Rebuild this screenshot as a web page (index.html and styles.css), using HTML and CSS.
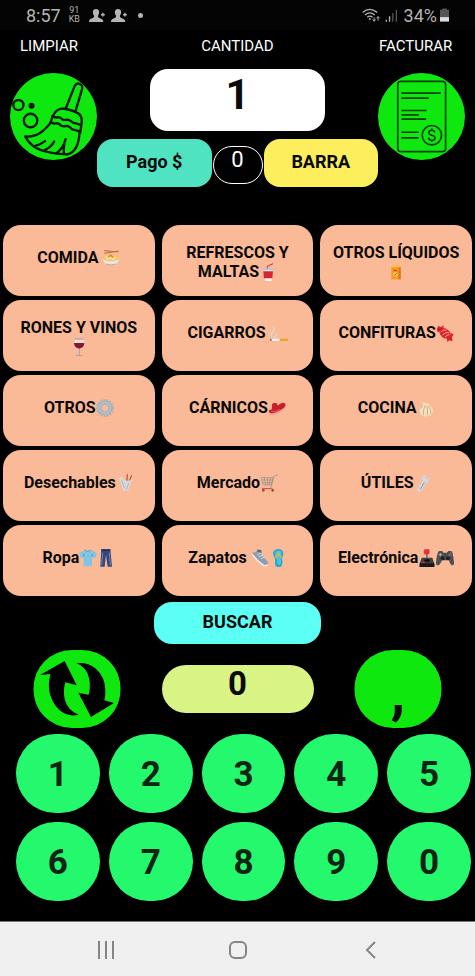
FILE: index.html
```html
<!DOCTYPE html>
<html lang="es">
<head>
<meta charset="utf-8">
<meta name="viewport" content="width=device-width, initial-scale=1">
<title>Punto de venta</title>
<link rel="stylesheet" href="styles.css">
</head>
<body>
<div class="screen">

  <!-- status bar -->
  <header class="status">
    <span class="clock">8:57</span>
    <span class="speed"><span>91</span><span>KB</span></span>
    <svg class="person" viewBox="0 0 16 15"><path d="M7 1c2.300 0 3.400 1.600 3.100 3.800-.2 1.500-.8 2.400-1.200 3 0 1.700.7 2 2.600 2.800 1.800.7 2.700 1.300 2.800 3.400H0c0-2.100.8-2.700 2.600-3.400 1.900-.8 2.500-1.100 2.500-2.800-.5-.6-1.100-1.500-1.200-3C3.600 2.600 4.700 1 7 1zM12 6h1.200V4.800h1.400V6h1.200v1.400h-1.200v1.200h-1.400V7.400H12z"/></svg>
    <svg class="person" viewBox="0 0 16 15"><path d="M7 1c2.300 0 3.400 1.600 3.100 3.800-.2 1.500-.8 2.400-1.200 3 0 1.700.7 2 2.600 2.800 1.800.7 2.700 1.300 2.800 3.400H0c0-2.100.8-2.700 2.600-3.400 1.900-.8 2.500-1.100 2.500-2.800-.5-.6-1.100-1.500-1.200-3C3.600 2.600 4.700 1 7 1zM12 6h1.200V4.800h1.400V6h1.200v1.400h-1.200v1.200h-1.400V7.400H12z"/></svg>
    <span class="dot"></span>
    <svg class="wifi" viewBox="384 20 58 45"><g fill="none" stroke="#b4b4b4" stroke-width="4"><path d="M386 33q21-18 44 0M393 41q15-13 30 0M400 48q8-7 16 0"/><path stroke-width="3" d="M421 48v12M416 55l5 5 5-5M433 58V46M428 51l5-5 5 5"/></g><circle cx="408" cy="53" r="3" fill="#b4b4b4"/></svg>
    <svg class="signal" viewBox="454 24 38 40"><path fill="#b4b4b4" d="M455 57h4v6h-4zM465 46h4v17h-4z"/><path fill="#555" d="M475 36h4v27h-4zM486 26h4v37h-4z"/></svg>
    <span class="percent">34%</span>
    <svg class="battery" viewBox="614 22 28 41"><path fill="#555" d="M621 22h14v4h7v24h-28V26h7z"/><path fill="#ddd" d="M614 49h28v14h-28z"/></svg>
  </header>

  <main>
    <section class="top">
      <div class="side">
        <label class="caption" for="limpiar">LIMPIAR</label>
        <button class="round" id="limpiar" type="button">
          <!-- broom -->
          <svg viewBox="0 0 258 258">
            <g fill="none" stroke="#001a00" stroke-width="7" stroke-linejoin="round" stroke-linecap="round">
              <path d="M165 106L192 38Q197 29 206 32Q216 35 214 47L194 114"/>
              <path d="M125 131L133 118Q143 104 160 106Q185 109 203 120Q214 129 213 144L208 178"/>
              <path d="M126 128Q134 134 142 131Q150 131 156 138Q164 140 171 138Q180 140 186 147Q198 150 209 154"/>
              <path d="M121 146Q130 152 139 149Q147 150 153 157Q162 159 169 157Q177 159 184 167Q194 169 206 173"/>
              <path d="M126 130L120 148Q96 178 76 184Q60 190 45 188Q60 217 92 229Q132 242 171 241Q204 232 206 176"/>
              <path d="M73 217Q91 212 104 202M102 229Q123 219 131 203M138 238Q159 222 165 196M160 240Q158 225 161 212"/>
              <circle cx="25" cy="95" r="15"/>
              <circle cx="61" cy="141" r="20"/>
            </g>
            <circle cx="64" cy="97" r="9" fill="#001a00"/>
          </svg>
        </button>
      </div>

      <div class="center">
        <label class="caption" for="cantidad">CANTIDAD</label>
        <input class="amount" id="cantidad" type="text" inputmode="numeric" value="1">
        <div class="pay">
          <button class="pago" type="button">Pago $</button>
          <output class="count">0</output>
          <button class="barra" type="button">BARRA</button>
        </div>
      </div>

      <div class="side invoice">
        <label class="caption" for="facturar">FACTURAR</label>
        <button class="round" id="facturar" type="button">
          <!-- invoice -->
          <svg viewBox="427 219 260 260">
            <g fill="none" stroke="#034003" stroke-width="5">
              <rect x="486" y="244" width="143" height="210" rx="9"/>
              <path d="M497 279h117M497 294h82M497 331h75M497 344h52M497 357h74M497 396h52M497 413h52"/>
              <circle cx="588" cy="405" r="29" fill="#0ee80e"/>
              <path d="M597 397Q595 390 588 390Q579 390 579 397Q579 403 588 405Q597 407 597 413Q597 420 588 420Q579 420 578 412M588 385v5M588 420v5"/>
            </g>
          </svg>
        </button>
      </div>
    </section>

    <section class="categories">
      <button type="button"><span>COMIDA <svg class="emoji" viewBox="309 101 54 54"><path fill="#e9e6df" d="M311 128h50q-2 16-13 20-13 5-25-1-11-6-12-19z"/><ellipse cx="336" cy="128" rx="25" ry="10" fill="#f5c36c"/><path d="M318 127q8-8 16 0t18-2M321 132q12-7 24 1" fill="none" stroke="#fbe3a0" stroke-width="4"/><path d="M327 125l8-5 7 6" fill="none" stroke="#dd7e33" stroke-width="4"/><path d="M315 106l43 4M316 114l43-7" stroke="#a5764a" stroke-width="3"/><path d="M322 146q14 7 28 0" stroke="#b9a59a" stroke-width="3" fill="none"/></svg></span></button>
      <button type="button"><span>REFRESCOS Y MALTAS<svg class="emoji" viewBox="74 140 54 54"><path d="M99 158v-8l17-8" fill="none" stroke="#dd2b33" stroke-width="3"/><path fill="#f3eeee" d="M87 160h29l-4 34H92z"/><path fill="#d2272f" d="M87 165h29l-2 21H89z"/><path fill="#b8c7d3" d="M84 156h34v6H84z"/></svg></span></button>
      <button type="button"><span>OTROS LÍQUIDOS <svg class="emoji" viewBox="455 147 54 54"><path fill="#f39a21" d="M468 158h28v38h-28z"/><path fill="#ffc247" d="M468 158l5-5h23v7h-28z"/><path fill="#e2751a" d="M490 160h6v36h-6z"/><circle cx="480" cy="181" r="7" fill="#ffc95d"/><path d="M474 168l11 3M477 184l7-6" stroke="#b74310" stroke-width="3"/></svg></span></button>

      <button type="button"><span>RONES Y VINOS <svg class="emoji" viewBox="211 368 54 54"><path fill="#e7dad9" d="M225 370h27l3 15q0 14-14 17v14l8 4h-20l8-4v-14q-14-3-14-17z"/><path fill="#8b1728" d="M223 383h31q0 15-16 17-15-3-15-17z"/><path d="M239 401v17M230 420h18M225 371h27" stroke="#827b80" stroke-width="2"/><path d="M229 374l-2 9" stroke="#fff" stroke-width="3"/></svg></span></button>
      <button type="button"><span>CIGARROS <svg class="emoji" viewBox="105 325 54 54"><path fill="#f6f3ef" d="M106 369h29v7h-29z"/><path fill="#eda427" d="M134 369h25v7h-25z"/><path fill="#777" d="M105 369h5v7h-5z"/><path d="M111 365q-6-9 2-16 7-7 2-17M117 365q9-4 6-12" fill="none" stroke="#e3d3ca" stroke-width="5"/></svg></span></button>
      <button type="button"><span>CONFITURAS<svg class="emoji" viewBox="605 324 54 54"><g fill="#d9252d"><path d="M607 341l5-12 7 5 9-6-1 17-17 3zM637 364l14-13 7 5-5 6 1 14-9-3-6 5z"/><ellipse cx="632" cy="352" rx="18" ry="14" transform="rotate(38 632 352)"/></g><path d="M619 348q10-9 18-6M624 357q11-11 20-7M632 363q7-8 14-7" fill="none" stroke="#ff9a9a" stroke-width="3"/><path d="M611 341l10-3M646 366l6 5" stroke="#9c101d" stroke-width="2"/></svg></span></button>

      <button type="button"><span>OTROS<svg class="emoji" viewBox="289 85 54 54"><circle cx="316" cy="112" r="24" fill="none" stroke="#a3b0b6" stroke-width="6" stroke-dasharray="5 4"/><circle cx="316" cy="112" r="16" fill="none" stroke="#a8b5bc" stroke-width="13"/><circle cx="316" cy="112" r="16" fill="none" stroke="#bcc8cd" stroke-width="3"/></svg></span></button>
      <button type="button"><span>CÁRNICOS<svg class="emoji" viewBox="99 85 54 54"><path fill="#f0a49b" d="M101 125q-1 10 12 9 24-4 38-22l-1-10-46 14z"/><path fill="#c91d2b" d="M103 118q9 2 8-8-2-14 8-13 10-1 9 8 13-13 23-6 3 9-11 17-18 12-31 12-10-1-6-10z"/><path d="M109 122q13 3 25-6" fill="none" stroke="#f4777a" stroke-width="2"/></svg></span></button>
      <button type="button"><span>COCINA<svg class="emoji" viewBox="545 84 54 54"><path fill="#f1dfbd" d="M559 91q7 6 12 5 8 1 13 9 11 6 9 17-4 12-18 14-16 2-21-9-4-12 9-19 3-9-4-17z"/><path d="M570 103q-10 17-5 30M575 105q4 16 0 29M580 105q8 11 6 24" fill="none" stroke="#b99c73" stroke-width="2"/><path fill="#fff3d7" d="M563 110q-8 8-4 17-10-10 4-17z"/></svg></span></button>

      <button type="button"><span>Desechables<svg class="emoji" viewBox="349 310 54 54"><path d="M381 338l2-27M387 336l9-22" stroke="#a63931" stroke-width="3"/><path fill="#d6d9db" d="M358 321l8-3 9 11 11 2 12-7-6 17-7 19-13 2-5-13z"/><path d="M366 328l8 24M388 336l-9 22" stroke="#9da4a9" stroke-width="2"/></svg></span></button>
      <button type="button"><span>Mercado<svg class="emoji" viewBox="77 309 54 54"><path d="M80 320h37l-6 22H87zM118 315l-9 38H83M119 315l12-3M84 327h31M85 335h28M90 320l4 22M100 320v22M109 320l-4 22" fill="none" stroke="#928b8a" stroke-width="2"/><circle cx="87" cy="358" r="4" fill="#bd3830"/><circle cx="115" cy="358" r="4" fill="#bd3830"/><path d="M83 353h32" stroke="#bd3830" stroke-width="2"/></svg></span></button>
      <button type="button"><span>ÚTILES<svg class="emoji" viewBox="531 312 54 54"><path fill="#cfd8dd" d="M560 318l11-5-3 12 5 3 7-8q2 19-11 20l-11 21q-7 9-13 2-3-5 2-10l12-20q-4-9 1-15z"/><path d="M565 337l-12 21" stroke="#8496a1" stroke-width="3"/></svg></span></button>

      <button type="button"><span>Ropa<svg class="emoji" viewBox="240 85 54 54"><path fill="#80c5e6" d="M257 88l9 4 9-4 19 10-6 15-9-4v28h-25v-28l-8 3-6-14z"/><path d="M257 88q9 9 18 0M255 108l-1-8M279 108l1-8" fill="none" stroke="#3d87ac" stroke-width="2"/></svg><svg class="emoji" viewBox="295 85 54 54"><path fill="#35457e" d="M308 86h27l5 52h-13l-5-35-4 35h-13z"/><path fill="#23305d" d="M308 86h27v5h-27z"/><path d="M312 96l-3 38M332 96l3 38" stroke="#7286b7" stroke-width="3"/></svg></span></button>
      <button type="button"><span>Zapatos <svg class="emoji" viewBox="47 85 54 54"><path fill="#8c9fae" d="M50 98l11-4 6-8 11 3 1 13 19 22-1 9-10 5q-18-15-28-29z"/><path d="M50 101l15 17 22 18 10-4" fill="none" stroke="#f4f5f5" stroke-width="4"/><path d="M65 102l13-5M70 108l13-5M76 114l12-5" stroke="#e6edf2" stroke-width="2"/><path fill="#536777" d="M65 92l4-5 9 2v7z"/></svg><svg class="emoji" viewBox="103 85 54 54"><path fill="#1cacd0" d="M116 94q4-10 17-9 12 2 13 13-1 9-4 17 4 18-4 23-9 4-16-3-1-12-1-20-7-10-5-21z"/><path fill="#4fc3dd" d="M122 94q7-9 16-3 5 8 0 22 3 17-2 21-9 0-9-17-9-13-5-23z"/><path d="M120 111q10-5 11-16 3 12 11 17" fill="none" stroke="#e7b53b" stroke-width="4"/></svg></span></button>
      <button type="button"><span>Electrónica<svg class="emoji" viewBox="550 85 54 54"><path stroke="#777" stroke-width="5" d="M577 97v24"/><circle cx="576" cy="93" r="9" fill="#e2333a"/><path fill="#3f4044" d="M561 111h32l6 18v10h-44v-10z"/><path fill="#17181b" d="M555 128h44v11h-44z"/><ellipse cx="577" cy="120" rx="9" ry="4" fill="#111"/><path stroke="#d62d34" stroke-width="4" d="M562 125h8"/><path fill="#e8bab8" d="M572 90q2-5 5-3z"/></svg><svg class="emoji" viewBox="607 85 54 54"><path fill="#4c4e51" d="M616 91h10l3 5h11l4-5h9q5 2 8 35 0 9-5 8-7-1-10-15h-21q-6 15-13 15-5 0-5-8 3-30 9-35z"/><g fill="#222"><circle cx="627" cy="113" r="6"/><circle cx="643" cy="113" r="6"/></g><path d="M615 102h10M620 97v10" stroke="#b4b4b4" stroke-width="3"/><circle cx="651" cy="98" r="2" fill="#55ae75"/><circle cx="655" cy="103" r="2" fill="#d45050"/><circle cx="647" cy="103" r="2" fill="#d69ac2"/></svg></span></button>
    </section>

    <button class="buscar" type="button">BUSCAR</button>

    <section class="total">
      <button class="clipped" type="button" aria-label="Cambiar">
        <svg viewBox="0 0 264 234">
          <path d="M21 75L95 33L131 106L97 97Q89 125 96 151Q106 184 137 194Q104 202 79 180Q53 155 48 118Q46 92 53 72Z"/>
          <path d="M130 40Q163 36 187 55Q216 80 217 119Q218 137 214 151L243 159L174 201L136 128L167 134Q176 98 163 69Q152 48 130 40Z"/>
        </svg>
      </button>
      <input class="result" type="text" value="0" aria-label="Total">
      <button class="clipped comma" type="button">,</button>
    </section>

    <section class="keys">
      <button type="button">1</button>
      <button type="button">2</button>
      <button type="button">3</button>
      <button type="button">4</button>
      <button type="button">5</button>
      <button type="button">6</button>
      <button type="button">7</button>
      <button type="button">8</button>
      <button type="button">9</button>
      <button type="button">0</button>
    </section>
  </main>

  <!-- system buttons -->
  <nav class="system">
    <button type="button" aria-label="Recientes"><svg viewBox="0 0 20 20"><path d="M4 1v18M11 1v18M18 1v18"/></svg></button>
    <button type="button" aria-label="Inicio"><svg viewBox="0 0 20 20"><rect x="2" y="2" width="16" height="16" rx="5"/></svg></button>
    <button type="button" aria-label="Atrás"><svg viewBox="0 0 20 20"><path d="M14 2L6 10l8 8"/></svg></button>
  </nav>

</div>
</body>
</html>
```

FILE: styles.css
```css
* {
  box-sizing: border-box;
}

body {
  margin: 0;
  background: #000;
  color: #fff;
  font-family: Roboto, "Liberation Sans", sans-serif;
}

button, input {
  margin: 0;
  padding: 0;
  border: 0;
  color: #0a0a0a;
  font-family: inherit;
  font-weight: bold;
}

button {
  cursor: pointer;
}

svg {
  display: block;
}

.screen {
  display: flex;
  flex-direction: column;
  min-height: 100vh;
}

/* status bar */
.status {
  display: flex;
  align-items: center;
  height: 30px;
  padding: 0 26px;
  background: #040404;
  color: #b4b4b4;
  font-size: 18px;
}

.speed {
  display: flex;
  flex-direction: column;
  align-items: center;
  margin: 0 9px 0 8px;
  font-size: 9px;
  line-height: 9px;
}

.person {
  width: 16px;
  height: 15px;
  margin-right: 6px;
  fill: #b4b4b4;
}

.dot {
  width: 5px;
  height: 5px;
  margin-left: 5px;
  border-radius: 50%;
  background: #b4b4b4;
}

.wifi {
  width: 19px;
  height: 15px;
  margin-left: auto;
}

.signal {
  width: 13px;
  height: 13px;
  margin: 0 6px 0 4px;
}

.battery {
  width: 9px;
  height: 14px;
  margin-left: 3px;
}

/* quantity and the two round buttons */
.top {
  display: flex;
  align-items: flex-start;
  padding: 6px 10px 0;
}

.side {
  display: flex;
  flex-direction: column;
  gap: 17px;
  width: 87px;
}

.side .caption {
  padding-left: 10px;
}

.invoice .caption {
  padding-left: 1px;
}

.center {
  flex: 1;
  display: flex;
  flex-direction: column;
  align-items: center;
}

.caption {
  font-size: 15px;
  line-height: 20px;
}

.round {
  width: 87px;
  height: 87px;
  border-radius: 50%;
  background: #0ee80e;
}

.amount {
  width: 62%;
  height: 62px;
  margin: 13px 0 8px;
  padding-bottom: 12px;
  border-radius: 18px;
  background: #fff;
  font-size: 42px;
  text-align: center;
}

.pay {
  display: flex;
  align-items: center;
  width: 100%;
}

.pay button {
  flex: 1;
  height: 48px;
  padding-bottom: 3px;
  border-radius: 16px;
  font-size: 18px;
}

.pay .pago {
  background: #50e3c2;
}

.pay .barra {
  background: #fcee5d;
}

.count {
  width: 50px;
  height: 38px;
  margin: 4px 1px 0;
  border: 1px solid #fff;
  border-radius: 19px;
  font-size: 22px;
  line-height: 25px;
  text-align: center;
}

/* product groups */
.categories {
  display: grid;
  grid-template-columns: repeat(3, 1fr);
  gap: 4px 7px;
  padding: 38px 3px 0;
}

.categories button {
  display: flex;
  align-items: center;
  justify-content: center;
  height: 71px;
  padding: 3px 8px 0;
  border-radius: 18px;
  background: #fab997;
  font-size: 16px;
  line-height: 19px;
}

.categories span {
  min-height: 28px;
}

.emoji {
  display: inline-block;
  width: 18px;
  height: 18px;
  vertical-align: -4px;
}

.buscar {
  display: block;
  width: 35%;
  height: 42px;
  margin: 6px auto;
  padding-bottom: 3px;
  border-radius: 18px;
  background: #5cfff3;
  font-size: 18px;
}

.total {
  display: flex;
  align-items: center;
  justify-content: space-between;
  padding: 0 33px;
}

.clipped {
  width: 88px;
  height: 78px;
  border-radius: 40px;
  background: radial-gradient(circle, #0ee80e 43px, transparent 44px);
}

.comma {
  padding-top: 6px;
  font-size: 60px;
  line-height: 60px;
}

.result {
  width: 152px;
  height: 48px;
  padding-bottom: 12px;
  border-radius: 24px;
  background: #d9f484;
  font-size: 33px;
  text-align: center;
}

.keys {
  display: grid;
  grid-template-columns: repeat(5, 1fr);
  gap: 9px;
  padding: 6px 4px 20px 16px;
}

.keys button {
  height: 79px;
  padding-top: 2px;
  border-radius: 40px;
  background: #24f86c;
  color: #102416;
  font-size: 35px;
}

/* bottom bar */
.system {
  display: flex;
  align-items: center;
  justify-content: center;
  gap: 93px;
  height: 56px;
  margin-top: auto;
  border-top: 1px solid #777;
  background: #f0f0f0;
}

.system button {
  width: 40px;
  height: 40px;
  padding: 10px;
  background: none;
}

.system svg {
  fill: none;
  stroke: #858585;
  stroke-width: 2;
}
```
